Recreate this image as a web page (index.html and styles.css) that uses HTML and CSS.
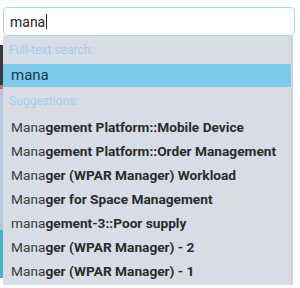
FILE: index.html
```html
<!DOCTYPE html>
<html lang="en">
  <head>
    <meta charset="UTF-8" />
    <meta name="viewport" content="width=device-width, initial-scale=1.0" />
    <title>Search</title>
    <link rel="stylesheet" href="styles.css">
  </head>
  <body>
    <div class="page">
      <div class="edge">
        <div class="edge-top"></div>
        <div class="edge-dark"></div>
        <div class="edge-pink"></div>
        <div class="edge-light"></div>
        <div class="edge-teal"></div>
      </div>
      <div class="search">
        <div class="search-box">
          <span class="search-text">mana</span><span class="caret"></span>
        </div>
        <div class="dropdown">
          <div class="group-label first">Full-text search:</div>
          <div class="option active">mana</div>
          <div class="group-label">Suggestions:</div>
          <div class="option"><span class="hit">Mana</span>gement Platform::Mobile Device</div>
          <div class="option"><span class="hit">Mana</span>gement Platform::Order Management</div>
          <div class="option"><span class="hit">Mana</span>ger (WPAR Manager) Workload</div>
          <div class="option"><span class="hit">Mana</span>ger for Space Management</div>
          <div class="option"><span class="hit">mana</span>gement-3::Poor supply</div>
          <div class="option"><span class="hit">Mana</span>ger (WPAR Manager) - 2</div>
          <div class="option"><span class="hit">Mana</span>ger (WPAR Manager) - 1</div>
        </div>
      </div>
    </div>
  </body>
</html>
```

FILE: styles.css
```css
body {
  margin: 0;
  padding: 0;
  background: #fff;
  font-family: Roboto, "Liberation Sans", sans-serif;
  color: #333;
}

.page {
  display: flex;
  height: 288px;
  overflow: hidden;
}

/* strip of the page that peeks out behind the widget */
.edge {
  width: 3px;
  display: flex;
  flex-direction: column;
}

.edge-top {
  height: 45px;
  background: #fff;
}

.edge-dark {
  height: 40px;
  background: #3a3b3f;
}

.edge-pink {
  height: 4px;
  background: #c86a8c;
}

.edge-light {
  height: 141px;
  background: #b7c6d8;
}

.edge-teal {
  height: 48px;
  background: #3fb8c8;
}

.search {
  width: 292px;
  padding-top: 7px;
}

.search-box {
  height: 27px;
  border: 1px solid #a9d9de;
  border-radius: 4px;
  background: #fff;
  display: flex;
  align-items: center;
  padding-left: 6px;
}

.search-text {
  font-size: 14px;
  color: #222;
}

.caret {
  width: 1px;
  height: 15px;
  background: #222;
  margin-left: 1px;
}

.dropdown {
  width: 288px;
  background: #d8dce4;
  border-right: 2px solid #cfd3dc;
  padding-bottom: 2px;
}

.group-label {
  font-size: 12px;
  color: #9fd0ee;
  padding: 0 6px;
  height: 28px;
  line-height: 28px;
}

.option {
  height: 24px;
  line-height: 24px;
  padding: 0 8px;
  font-size: 13.7px;
  font-weight: 700;
  color: #2b2b2b;
  white-space: nowrap;
  overflow: hidden;
}

.option .hit {
  font-weight: 400;
  color: #3a3a3a;
}

.option.active {
  background: #7ccbea;
  height: 23px;
  line-height: 23px;
  font-size: 15px;
  font-weight: 400;
  color: #1c3440;
}
```
